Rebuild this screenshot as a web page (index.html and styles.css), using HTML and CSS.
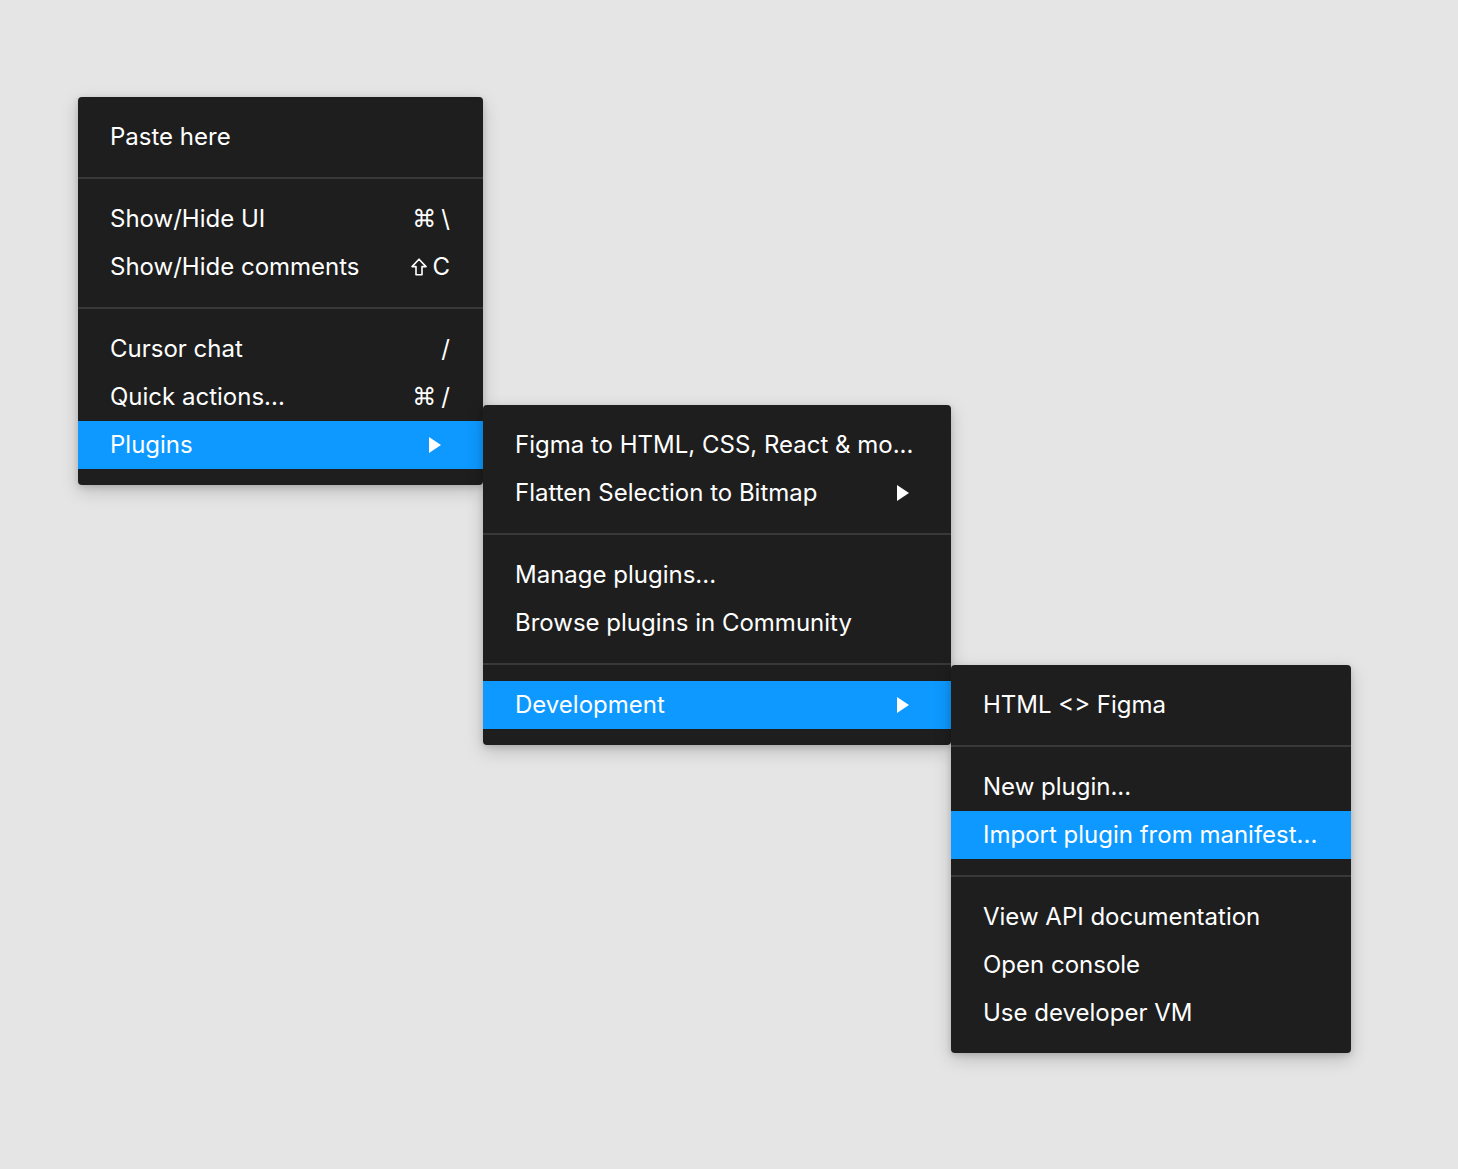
FILE: index.html
```html
<!DOCTYPE html>
<html lang="en">
<head>
<meta charset="utf-8">
<title>Context menu</title>
<link rel="stylesheet" href="styles.css">
</head>
<body>
<div class="canvas">
  <div class="menu menu-main">
    <div class="group">
      <div class="item"><span class="label">Paste here</span></div>
    </div>
    <div class="sep"></div>
    <div class="group">
      <div class="item"><span class="label">Show/Hide UI</span><span class="shortcut"><span class="sym">⌘</span><span class="key">\</span></span></div>
      <div class="item"><span class="label">Show/Hide comments</span><span class="shortcut"><svg class="shift" width="16" height="18" viewBox="0 0 16 18" aria-label="Shift"><path d="M8 1.2 L15 8.6 H11 V16.8 H5 V8.6 H1 Z" fill="none" stroke="#ffffff" stroke-width="1.6" stroke-linejoin="round"/></svg><span class="key">C</span></span></div>
    </div>
    <div class="sep"></div>
    <div class="group">
      <div class="item"><span class="label">Cursor chat</span><span class="shortcut"><span class="key">/</span></span></div>
      <div class="item"><span class="label">Quick actions...</span><span class="shortcut"><span class="sym">⌘</span><span class="key">/</span></span></div>
      <div class="item active"><span class="label">Plugins</span><span class="arrow"></span></div>
    </div>
  </div>

  <div class="menu menu-plugins">
    <div class="group">
      <div class="item"><span class="label">Figma to HTML, CSS, React &amp; mo...</span></div>
      <div class="item"><span class="label">Flatten Selection to Bitmap</span><span class="arrow"></span></div>
    </div>
    <div class="sep"></div>
    <div class="group">
      <div class="item"><span class="label">Manage plugins...</span></div>
      <div class="item"><span class="label">Browse plugins in Community</span></div>
    </div>
    <div class="sep"></div>
    <div class="group">
      <div class="item active"><span class="label">Development</span><span class="arrow"></span></div>
    </div>
  </div>

  <div class="menu menu-dev">
    <div class="group">
      <div class="item"><span class="label">HTML &lt;&gt; Figma</span></div>
    </div>
    <div class="sep"></div>
    <div class="group">
      <div class="item"><span class="label">New plugin...</span></div>
      <div class="item active"><span class="label">Import plugin from manifest...</span></div>
    </div>
    <div class="sep"></div>
    <div class="group">
      <div class="item"><span class="label">View API documentation</span></div>
      <div class="item"><span class="label">Open console</span></div>
      <div class="item"><span class="label">Use developer VM</span></div>
    </div>
  </div>
</div>
</body>
</html>
```

FILE: styles.css
```css
html, body {
  margin: 0;
  padding: 0;
}

body {
  background: #e5e5e5;
  font-family: Inter, "Noto Sans", "Liberation Sans", sans-serif;
  color: #ffffff;
  width: 1458px;
  height: 1169px;
  overflow: hidden;
}

.canvas {
  display: flex;
  align-items: flex-start;
  padding: 97px 0 0 78px;
}

.menu {
  background: #1e1e1e;
  border-radius: 4px;
  box-shadow: 0 6px 18px rgba(0, 0, 0, 0.18), 0 2px 6px rgba(0, 0, 0, 0.14);
  display: flex;
  flex-direction: column;
  position: relative;
}

.menu-main {
  width: 405px;
  z-index: 1;
}

.menu-plugins {
  width: 468px;
  margin-top: 308px;
  z-index: 2;
}

.menu-dev {
  width: 400px;
  margin-top: 568px;
  z-index: 3;
}

.group {
  padding: 16px 0;
}

.sep {
  height: 2px;
  background: #383838;
}

.item {
  height: 48px;
  display: flex;
  align-items: center;
  justify-content: space-between;
  padding: 0 33px 0 32px;
  font-size: 24px;
  line-height: 48px;
  white-space: nowrap;
}

.item.active {
  background: #0d99ff;
}

.shortcut {
  display: flex;
  align-items: center;
  gap: 5px;
}

.sym {
  font-family: "DejaVu Sans", sans-serif;
  font-size: 24px;
}

.shift {
  display: block;
  margin-top: -1px;
}

.arrow {
  width: 0;
  height: 0;
  border-top: 8px solid transparent;
  border-bottom: 8px solid transparent;
  border-left: 12px solid #ffffff;
  margin-right: 9px;
}
```
